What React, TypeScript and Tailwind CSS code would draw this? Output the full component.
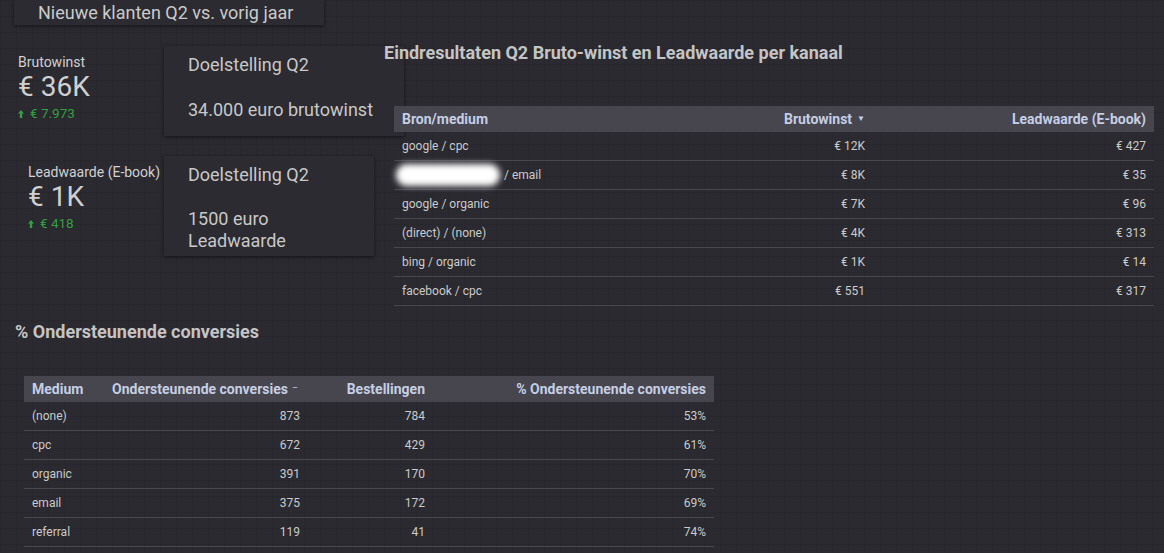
import React from 'react'

const font = { fontFamily: 'Roboto, "Noto Sans", sans-serif' }

const channels = [
  { src: 'google / cpc', bruto: '€ 12K', lead: '€ 427' },
  { src: '__blur__', bruto: '€ 8K', lead: '€ 35' },
  { src: 'google / organic', bruto: '€ 7K', lead: '€ 96' },
  { src: '(direct) / (none)', bruto: '€ 4K', lead: '€ 313' },
  { src: 'bing / organic', bruto: '€ 1K', lead: '€ 14' },
  { src: 'facebook / cpc', bruto: '€ 551', lead: '€ 317' },
]

const support = [
  { medium: '(none)', conv: 873, orders: 784, pct: '53%' },
  { medium: 'cpc', conv: 672, orders: 429, pct: '61%' },
  { medium: 'organic', conv: 391, orders: 170, pct: '70%' },
  { medium: 'email', conv: 375, orders: 172, pct: '69%' },
  { medium: 'referral', conv: 119, orders: 41, pct: '74%' },
]

function UpArrow() {
  return (
    <svg width="6" height="8" viewBox="0 0 6 8" className="inline-block mr-[6px] mt-[2px]">
      <path d="M3 0 L6 3.5 H4.2 V8 H1.8 V3.5 H0 Z" fill="#33a03f" />
    </svg>
  )
}

function Kpi({ label, value, delta, pad }: { label: string; value: string; delta: string; pad: string }) {
  return (
    <div className={`${pad} shrink-0 text-[#d0d0d0]`}>
      <div className="text-[14px] leading-[16px]">{label}</div>
      <div className="text-[28px] leading-[30px] mt-[2px]">{value}</div>
      <div className="text-[13.5px] leading-[14px] mt-[4px] text-[#33a03f] flex items-center">
        <UpArrow />
        {delta}
      </div>
    </div>
  )
}

function GoalCard({ w, h, gap, children }: { w: string; h: string; gap: string; children: React.ReactNode }) {
  return (
    <div className={`${w} ${h} shrink-0 bg-[#2c2b31] shadow-[0_1px_4px_rgba(0,0,0,0.55)] pt-[8px] pl-[24px] text-[18px] leading-[22px] text-[#c8c8c8]`}>
      <div>Doelstelling Q2</div>
      <div className={gap}>{children}</div>
    </div>
  )
}

export default function App() {
  return (
    <div
      style={font}
      className="w-[1164px] h-[553px] overflow-hidden bg-[#2b2a30] bg-[linear-gradient(to_right,#28272d_1px,transparent_1px),linear-gradient(to_bottom,#28272d_1px,transparent_1px)] bg-[size:16px_16px]"
    >
      <div className="flex h-[310px]">
        {/* left column */}
        <div className="w-[384px] shrink-0">
          <div className="ml-[14px] w-[310px] h-[25px] bg-[#2c2b31] shadow-[0_1px_4px_rgba(0,0,0,0.55)] pl-[24px] text-[18px] leading-[26px] text-[#cacaca]">
            Nieuwe klanten Q2 vs. vorig jaar
          </div>

          <div className="flex mt-[21px]">
            <Kpi pad="w-[164px] pl-[18px] pt-[8px]" label="Brutowinst" value="€ 36K" delta="€ 7.973" />
            <GoalCard w="w-[240px]" h="h-[90px]" gap="mt-[23px]">34.000 euro brutowinst</GoalCard>
          </div>

          <div className="flex mt-[20px]">
            <Kpi pad="w-[164px] pl-[28px] pt-[8px]" label="Leadwaarde (E-book)" value="€ 1K" delta="€ 418" />
            <GoalCard w="w-[210px]" h="h-[100px]" gap="mt-[22px]">
              1500 euro
              <br />
              Leadwaarde
            </GoalCard>
          </div>
        </div>

        {/* right column */}
        <div className="flex-1 pt-[42px] relative">
          <h2 className="text-[18px] leading-[22px] font-bold text-[#c4c4c4]">
            Eindresultaten Q2 Bruto-winst en Leadwaarde per kanaal
          </h2>
          <div className="ml-[10px] mt-[42px] w-[760px]">
            <div className="grid grid-cols-[1fr_200px_281px] h-[26px] items-center bg-[#47464e] text-[14px] font-bold text-[#c5cee4]">
              <div className="pl-[8px]">Bron/medium</div>
              <div className="pr-[8px] text-right flex justify-end items-center">
                Brutowinst
                <span className="ml-[5px] text-[8px] text-[#c5cee4]">▼</span>
              </div>
              <div className="pr-[8px] text-right">Leadwaarde (E-book)</div>
            </div>
            {channels.map((r, i) => (
              <div
                key={i}
                className="grid grid-cols-[1fr_200px_281px] h-[29px] items-center border-b border-[#48474d] text-[12px] text-[#cacaca]"
              >
                <div className="pl-[8px] flex items-center">
                  {r.src === '__blur__' ? (
                    <>
                      <span className="inline-block -ml-[6px] w-[104px] h-[22px] rounded-full bg-white blur-[3px]" />
                      <span className="ml-[4px]">/ email</span>
                    </>
                  ) : (
                    r.src
                  )}
                </div>
                <div className="pr-[8px] text-right">{r.bruto}</div>
                <div className="pr-[8px] text-right">{r.lead}</div>
              </div>
            ))}
          </div>
        </div>
      </div>

      {/* second section */}
      <div className="pt-[11px]">
        <h2 className="pl-[15px] text-[18px] leading-[22px] font-bold text-[#c4c4c4]">% Ondersteunende conversies</h2>
        <div className="ml-[24px] mt-[33px] w-[690px]">
          <div className="grid grid-cols-[80px_204px_125px_1fr] h-[26px] items-center bg-[#47464e] text-[14px] font-bold text-[#c5cee4]">
            <div className="pl-[8px]">Medium</div>
            <div className="pl-[8px] flex items-center">
              Ondersteunende conversies
              <span className="ml-[4px] font-normal text-[9px]">–</span>
            </div>
            <div className="pr-[8px] text-right">Bestellingen</div>
            <div className="pr-[8px] text-right">% Ondersteunende conversies</div>
          </div>
          {support.map((r) => (
            <div
              key={r.medium}
              className="grid grid-cols-[80px_204px_125px_1fr] h-[29px] items-center border-b border-[#48474d] text-[12px] text-[#cacaca]"
            >
              <div className="pl-[8px]">{r.medium}</div>
              <div className="pr-[8px] text-right">{r.conv}</div>
              <div className="pr-[8px] text-right">{r.orders}</div>
              <div className="pr-[8px] text-right">{r.pct}</div>
            </div>
          ))}
        </div>
      </div>
    </div>
  )
}
